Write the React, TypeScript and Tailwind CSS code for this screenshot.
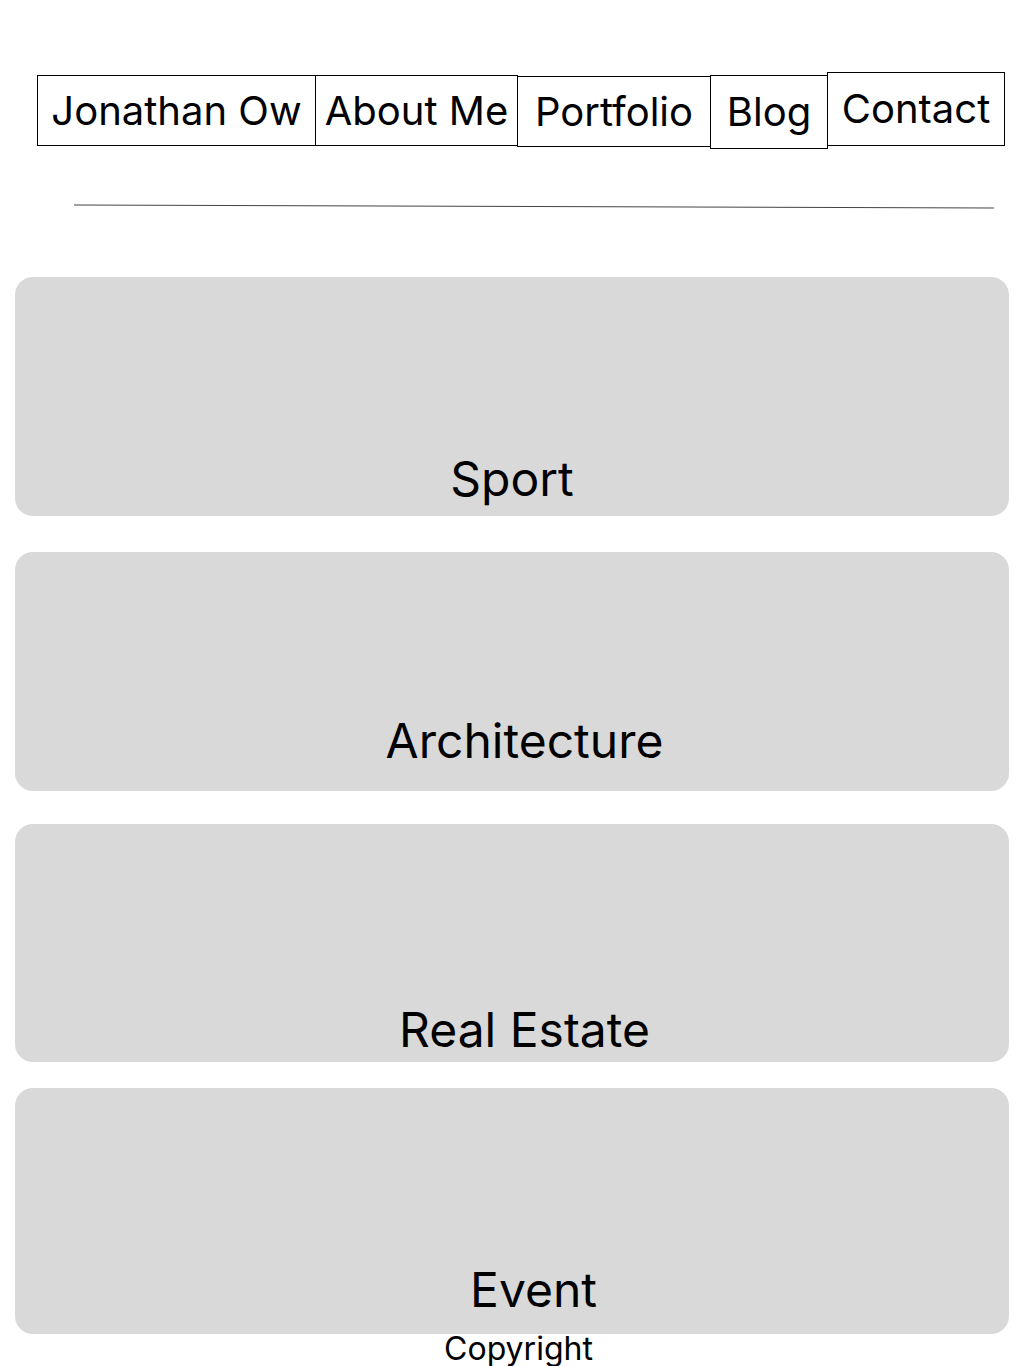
import React from "react";

const navItems = [
  { label: "Jonathan Ow", cls: "w-[279px] h-[71px] mt-[3px]" },
  { label: "About Me", cls: "w-[203px] h-[71px] mt-[3px] -ml-px" },
  { label: "Portfolio", cls: "w-[194px] h-[71px] mt-[4px] -ml-px" },
  { label: "Blog", cls: "w-[118px] h-[74px] mt-[3px] -ml-px" },
  { label: "Contact", cls: "w-[178px] h-[74px] mt-0 -ml-px" },
];

const cards = [
  { label: "Sport", cls: "h-[239px] mt-[67px] pb-[8px] pl-0" },
  { label: "Architecture", cls: "h-[239px] mt-[36px] pb-[21px] pl-[25px]" },
  { label: "Real Estate", cls: "h-[238px] mt-[33px] pb-[3px] pl-[25px]" },
  { label: "Event", cls: "h-[246px] mt-[26px] pb-[15px] pl-[43px]" },
];

export default function App() {
  return (
    <div
      className="w-[1024px] min-h-[1366px] bg-white text-black overflow-hidden"
      style={{ fontFamily: "Inter, 'Noto Sans', sans-serif" }}
    >
      <nav className="flex items-start pt-[72px] pl-[37px]">
        {navItems.map((n) => (
          <div
            key={n.label}
            className={`flex items-center justify-center border border-black text-[40px] leading-[48px] ${n.cls}`}
          >
            {n.label}
          </div>
        ))}
      </nav>

      <div className="pl-[74px] mt-[55px]">
        <svg width="921" height="6" viewBox="0 0 921 6" className="block">
          <line x1="0" y1="1" x2="920" y2="4" stroke="#444" strokeWidth="1" />
        </svg>
      </div>

      <main className="px-[15px]">
        {cards.map((c) => (
          <div
            key={c.label}
            className={`flex items-end justify-center rounded-[18px] bg-[#d9d9d9] ${c.cls}`}
          >
            <span className="text-[48px] leading-[58px]">{c.label}</span>
          </div>
        ))}
      </main>

      <footer className="-mt-[5px] flex justify-center pl-[13px]">
        <span className="text-[32px] leading-[39px]">Copyright</span>
      </footer>
    </div>
  );
}
